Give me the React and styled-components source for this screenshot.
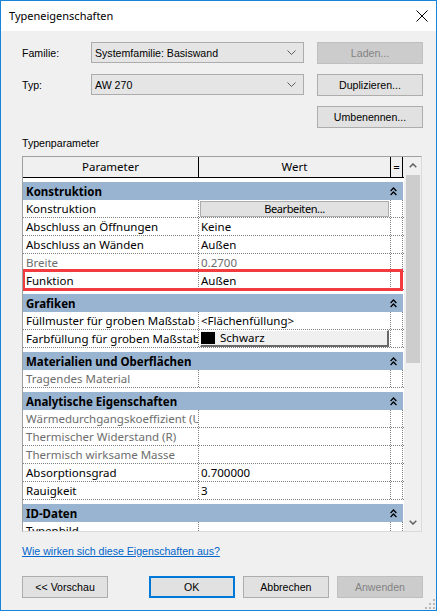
import React from "react";
import styled, { createGlobalStyle } from "styled-components";

const GlobalStyle = createGlobalStyle`
  html, body {
    margin: 0;
    padding: 0;
    background: #ffffff;
  }
  body {
    font-family: "Liberation Sans", Arial, sans-serif;
    font-size: 10.6px;
    color: #000000;
  }
`;

const Window = styled.div`
  position: relative;
  width: 437px;
  height: 611px;
  box-sizing: border-box;
  border: 1px solid #1883d7;
  background: #f0f0f0;
  display: flex;
  flex-direction: column;
`;

const TitleBar = styled.div`
  height: 30px;
  flex: none;
  background: #ffffff;
  display: flex;
  align-items: center;
  justify-content: space-between;
  padding: 0 8px 1px 8px;
  box-sizing: border-box;
  font-family: "Noto Sans", sans-serif;
  font-size: 11px;
`;

const CloseButton = styled.svg`
  width: 12px;
  height: 12px;
  margin-top: 1px;
`;

const Body = styled.div`
  flex: 1;
  padding: 11px 0 0 21px;
  display: flex;
  flex-direction: column;
`;

const FormGrid = styled.div`
  display: grid;
  width: 401px;
  grid-template-columns: 69px 213px 1fr;
  grid-auto-rows: 22px;
  row-gap: 10px;
  align-items: center;
`;

const Label = styled.div`
  line-height: 14px;
`;

const Combo = styled.div`
  height: 21px;
  box-sizing: border-box;
  align-self: start;
  border: 1px solid #acacac;
  background: #e5e5e5;
  display: flex;
  align-items: center;
  justify-content: space-between;
  padding: 0 7px 0 3px;
`;

const Chevron = styled.svg`
  width: 9px;
  height: 5px;
`;

const Button = styled.div`
  width: ${(p) => p.$width || 88}px;
  height: 22px;
  box-sizing: border-box;
  justify-self: end;
  grid-column: ${(p) => p.$col || "auto"};
  display: flex;
  align-items: center;
  justify-content: center;
  background: ${(p) => (p.$disabled ? "#cccccc" : "#e1e1e1")};
  border: ${(p) =>
    p.$default ? "2px solid #0078d7" : p.$disabled ? "1px solid #bfbfbf" : "1px solid #adadad"};
  color: ${(p) => (p.$disabled ? "#838383" : "#000000")};
`;

const SectionLabel = styled.div`
  line-height: 14px;
  margin: 8px 0 6px 0;
`;

const Table = styled.div`
  width: 400px;
  height: 376px;
  box-sizing: border-box;
  border-top: 1px solid #a0a0a0;
  border-left: 1px solid #a0a0a0;
  border-right: 1px solid #dadada;
  border-bottom: 1px solid #dadada;
  display: flex;
  background: #ffffff;
  font-family: "Noto Sans", sans-serif;
  font-size: 11.5px;
`;

const GridArea = styled.div`
  width: 381px;
  display: flex;
  flex-direction: column;
  overflow: hidden;
`;

const HeaderRow = styled.div`
  height: 21px;
  flex: none;
  box-sizing: border-box;
  display: grid;
  grid-template-columns: 176px 192px 12px 1fr;
  background: #f0f0f0;
  border-bottom: 1px solid #000000;
`;

const HeaderCell = styled.div`
  border-right: ${(p) => (p.$last ? "none" : "1px solid #000000")};
  display: flex;
  align-items: center;
  justify-content: center;
  line-height: 14px;
`;

const Rows = styled.div`
  flex: 1;
  overflow: hidden;
`;

const Group = styled.div`
  padding-top: 4px;
  background: #ffffff;
`;

const Band = styled.div`
  height: 18px;
  width: 380px;
  background: #99b4d1;
  display: flex;
  align-items: center;
  justify-content: space-between;
  padding: 0 6px 0 3px;
  box-sizing: border-box;
  font-weight: 700;
`;

const Collapse = styled.svg`
  width: 7px;
  height: 9px;
`;

const Row = styled.div`
  position: relative;
  height: 18px;
  box-sizing: border-box;
  display: grid;
  grid-template-columns: 176px 192px 12px 1fr;
  border-bottom: 1px dotted #808080;
`;

const Cell = styled.div`
  border-right: ${(p) => (p.$open ? "none" : "1px dotted #808080")};
  padding-left: ${(p) => (p.$value ? 2 : 3)}px;
  color: ${(p) => (p.$dim ? "#6d6d6d" : "#000000")};
  line-height: 17px;
  white-space: nowrap;
  overflow: hidden;
`;

const ValueCell = styled.div`
  border-right: 1px dotted #808080;
  padding: 1px 1px 0 1px;
  overflow: hidden;
`;

const EditButton = styled.div`
  height: 16px;
  box-sizing: border-box;
  background: #e1e1e1;
  border: 1px solid #adadad;
  display: flex;
  align-items: center;
  justify-content: center;
  line-height: 14px;
  font-size: 11px;
  letter-spacing: -0.4px;
`;

const ColorButton = styled.div`
  height: 17px;
  box-sizing: border-box;
  background: #f0f0f0;
  border-top: 1px solid #ffffff;
  border-left: 1px solid #ffffff;
  border-right: 2px solid #696969;
  border-bottom: 2px solid #696969;
  display: flex;
  align-items: center;
  gap: 5px;
  line-height: 14px;
  margin-top: -1px;
`;

const Swatch = styled.span`
  width: 14px;
  height: 12px;
  background: #000000;
`;

const Marker = styled.div`
  position: absolute;
  left: -1px;
  right: 1px;
  top: -3px;
  bottom: -2px;
  border: 3px solid #f23b3e;
  pointer-events: none;
`;

const Scrollbar = styled.div`
  width: 17px;
  background: #f0f0f0;
  display: flex;
  flex-direction: column;
`;

const ScrollArrow = styled.div`
  height: 17px;
  flex: none;
  display: flex;
  align-items: center;
  justify-content: center;
`;

const Thumb = styled.div`
  height: 188px;
  margin: 1px 1px 0 2px;
  background: #cdcdcd;
`;

const Spacer = styled.div`
  flex: 1;
`;

const HelpLink = styled.div`
  margin-top: 12px;
  line-height: 14px;
  color: #0066cc;
  text-decoration: underline;
`;

const Footer = styled.div`
  display: flex;
  margin-top: 18px;
  width: 401px;
  gap: 8px;
`;

const FooterGap = styled.div`
  width: 25px;
`;

const Grip = styled.svg`
  position: absolute;
  right: 1px;
  bottom: 1px;
  width: 11px;
  height: 11px;
`;

const groups = [
  {
    title: "Konstruktion",
    rows: [
      { p: "Konstruktion", kind: "edit", v: "Bearbeiten..." },
      { p: "Abschluss an Öffnungen", v: "Keine" },
      { p: "Abschluss an Wänden", v: "Außen" },
      { p: "Breite", v: "0.2700", dim: true },
      { p: "Funktion", v: "Außen", marked: true },
    ],
  },
  {
    title: "Grafiken",
    rows: [
      { p: "Füllmuster für groben Maßstab", v: "<Flächenfüllung>" },
      { p: "Farbfüllung für groben Maßstab", kind: "color", v: "Schwarz" },
    ],
  },
  {
    title: "Materialien und Oberflächen",
    rows: [{ p: "Tragendes Material", v: "", dim: true }],
  },
  {
    title: "Analytische Eigenschaften",
    rows: [
      { p: "Wärmedurchgangskoeffizient (U)", v: "", dim: true },
      { p: "Thermischer Widerstand (R)", v: "", dim: true },
      { p: "Thermisch wirksame Masse", v: "", dim: true },
      { p: "Absorptionsgrad", v: "0.700000" },
      { p: "Rauigkeit", v: "3" },
    ],
  },
  {
    title: "ID-Daten",
    rows: [{ p: "Typenbild", v: "" }],
  },
];

function ComboArrow() {
  return (
    <Chevron viewBox="0 0 9 5">
      <polyline points="0.5,0.5 4.5,4.5 8.5,0.5" fill="none" stroke="#5a5a5a" strokeWidth="1" />
    </Chevron>
  );
}

function Value({ row }) {
  if (row.kind === "edit") {
    return (
      <ValueCell>
        <EditButton>{row.v}</EditButton>
      </ValueCell>
    );
  }
  if (row.kind === "color") {
    return (
      <ValueCell>
        <ColorButton>
          <Swatch />
          {row.v}
        </ColorButton>
      </ValueCell>
    );
  }
  return (
    <Cell $value $dim={row.dim}>
      {row.v}
    </Cell>
  );
}

export default function App() {
  return (
    <>
      <GlobalStyle />
      <Window>
        <TitleBar>
          <span>Typeneigenschaften</span>
          <CloseButton viewBox="0 0 12 12">
            <path d="M0.5 0.5 L11.5 11.5 M11.5 0.5 L0.5 11.5" stroke="#000" strokeWidth="1" />
          </CloseButton>
        </TitleBar>

        <Body>
          <FormGrid>
            <Label>Familie:</Label>
            <Combo>
              <span>Systemfamilie: Basiswand</span>
              <ComboArrow />
            </Combo>
            <Button $width={106} $disabled>
              Laden...
            </Button>

            <Label>Typ:</Label>
            <Combo>
              <span>AW 270</span>
              <ComboArrow />
            </Combo>
            <Button $width={106}>Duplizieren...</Button>

            <Button $width={106} $col="3">
              Umbenennen...
            </Button>
          </FormGrid>

          <SectionLabel>Typenparameter</SectionLabel>

          <Table>
            <GridArea>
              <HeaderRow>
                <HeaderCell>Parameter</HeaderCell>
                <HeaderCell>Wert</HeaderCell>
                <HeaderCell>=</HeaderCell>
                <HeaderCell $last />
              </HeaderRow>
              <Rows>
                {groups.map((g) => (
                  <Group key={g.title}>
                    <Band>
                      <span>{g.title}</span>
                      <Collapse viewBox="0 0 7 9">
                        <polyline points="0.6,4 3.5,1 6.4,4" fill="none" stroke="#000" strokeWidth="1.3" />
                        <polyline points="0.6,8 3.5,5 6.4,8" fill="none" stroke="#000" strokeWidth="1.3" />
                      </Collapse>
                    </Band>
                    {g.rows.map((r) => (
                      <Row key={r.p}>
                        <Cell $dim={r.dim}>{r.p}</Cell>
                        <Value row={r} />
                        <Cell />
                        <Cell $open />
                        {r.marked && <Marker />}
                      </Row>
                    ))}
                  </Group>
                ))}
              </Rows>
            </GridArea>
            <Scrollbar>
              <ScrollArrow>
                <svg width="8" height="5" viewBox="0 0 8 5">
                  <polyline points="0.7,4.3 4,1 7.3,4.3" fill="none" stroke="#606060" strokeWidth="1.5" />
                </svg>
              </ScrollArrow>
              <Thumb />
              <Spacer />
              <ScrollArrow>
                <svg width="8" height="5" viewBox="0 0 8 5">
                  <polyline points="0.7,0.7 4,4 7.3,0.7" fill="none" stroke="#606060" strokeWidth="1.5" />
                </svg>
              </ScrollArrow>
            </Scrollbar>
          </Table>

          <HelpLink>Wie wirken sich diese Eigenschaften aus?</HelpLink>

          <Footer>
            <Button>&lt;&lt; Vorschau</Button>
            <FooterGap />
            <Button $default>OK</Button>
            <Button>Abbrechen</Button>
            <Button $disabled>Anwenden</Button>
          </Footer>
        </Body>

        <Grip viewBox="0 0 11 11">
          {[
            [9, 1],
            [9, 5],
            [5, 5],
            [9, 9],
            [5, 9],
            [1, 9],
          ].map(([x, y]) => (
            <rect key={`${x}-${y}`} x={x} y={y} width="2" height="2" fill="#b8b8b8" />
          ))}
        </Grip>
      </Window>
    </>
  );
}
